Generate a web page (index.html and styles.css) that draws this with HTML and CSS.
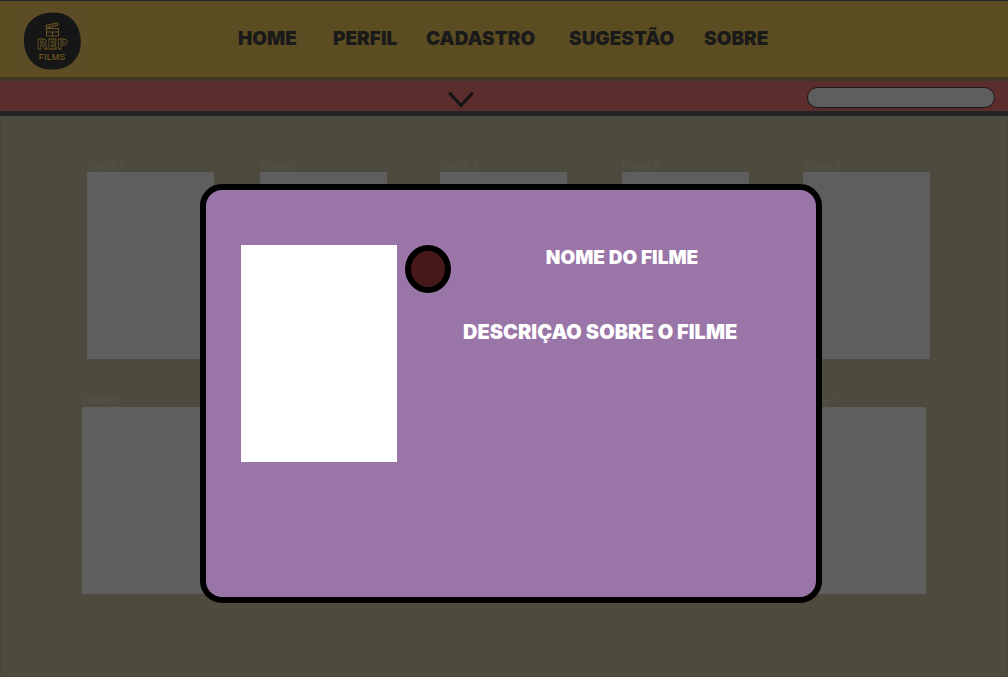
FILE: index.html
```
<!DOCTYPE html>
<html lang="pt-BR">
<head>
<meta charset="utf-8">
<meta name="viewport" content="width=device-width, initial-scale=1">
<title>REP Films</title>
<link rel="stylesheet" href="styles.css">
</head>
<body>
<div class="page">
  <header class="header">
    <a class="logo" href="#" aria-label="REP Films">
      <svg class="logo-art" viewBox="0 0 71 66" aria-hidden="true">
        <path class="logo-blob" d="M35 4.500C48 4 57 10 61 20C64 27 65 37 62 45C58 55 49 61 38 61.500C26 62 18 59 12.500 51C7 43 5.500 33 8 23C11 12 21 5 35 4.500Z"/>
        <g class="logo-line">
          <path d="M29.500 20.500h12v7.500h-12zM29.500 24h12M35.500 24v4M29.500 20l-.8-2.500 11.800-2.800.6 2.600zM32 17l1.500 2.500M35 16.200l1.500 2.500M38 15.500l1.500 2.300"/>
        </g>
        <text class="logo-rep" x="35" y="41">REP</text>
        <text class="logo-films" x="35" y="52">FILMS</text>
      </svg>
    </a>
    <nav class="nav">
      <a href="#">HOME</a>
      <a href="#">PERFIL</a>
      <a href="#">CADASTRO</a>
      <a href="#">SUGESTÃO</a>
      <a href="#">SOBRE</a>
    </nav>
  </header>
  <div class="toolbar">
    <button class="expand" type="button" aria-label="Expandir">
      <svg width="28" height="20" viewBox="0 0 28 20" aria-hidden="true"><path d="M3 4.500L14 16.500L25 4.500"/></svg>
    </button>
    <input class="search" type="search" aria-label="Buscar filme">
  </div>
  <main class="catalog">
    <div class="row row-five">
      <figure class="frame"><figcaption>Frame 1</figcaption><div class="thumb"></div></figure>
      <figure class="frame"><figcaption>Frame 2</figcaption><div class="thumb"></div></figure>
      <figure class="frame"><figcaption>Frame 3</figcaption><div class="thumb"></div></figure>
      <figure class="frame"><figcaption>Frame 4</figcaption><div class="thumb"></div></figure>
      <figure class="frame"><figcaption>Frame 5</figcaption><div class="thumb"></div></figure>
    </div>
    <div class="row row-two">
      <figure class="frame"><figcaption>Frame 6</figcaption><div class="thumb"></div></figure>
      <figure class="frame"><figcaption>Frame 7</figcaption><div class="thumb"></div></figure>
    </div>
  </main>
</div>
<section class="modal" role="dialog" aria-modal="true" aria-labelledby="film-title">
  <div class="poster"></div>
  <button class="close" type="button" aria-label="Fechar"></button>
  <div class="details">
    <h1 class="title" id="film-title">NOME DO FILME</h1>
    <p class="description">DESCRIÇAO SOBRE O FILME</p>
  </div>
</section>
</body>
</html>
```

FILE: styles.css
```
* {
  box-sizing: border-box;
}

body {
  margin: 0;
  font-family: Inter, "Liberation Sans", sans-serif;
  background: #4d4a3e;
}

.page {
  display: flex;
  flex-direction: column;
  min-height: 100vh;
}

.header {
  display: flex;
  align-items: center;
  height: 81px;
  padding-left: 17px;
  border-top: 1px solid #222326;
  border-bottom: 4px solid #3f3822;
  background: #5b4c22;
}

.logo {
  display: block;
  align-self: flex-end;
  width: 71px;
  height: 66px;
  margin-right: 150px;
  margin-bottom: 3px;
  background: #5d4d27;
}

.logo-art {
  display: block;
  width: 71px;
  height: 66px;
}

.logo-blob {
  fill: #161616;
}

.logo-line {
  fill: none;
  stroke: #6b5420;
  stroke-width: 1;
}

.logo-rep {
  font: 700 14px "DejaVu Sans", sans-serif;
  text-anchor: middle;
  fill: #161616;
  stroke: #6b5420;
  stroke-width: 0.8;
}

.logo-films {
  font: 400 9px "Liberation Sans", sans-serif;
  text-anchor: middle;
  fill: #80621f;
}

.nav {
  display: grid;
  grid-template-columns: 95px 93px 143px 135px auto;
  font-size: 19px;
  line-height: 24px;
  font-weight: 900;
}

.nav a {
  color: #1a1a1a;
  text-decoration: none;
}

.toolbar {
  display: grid;
  grid-template-columns: 1fr 188px;
  align-items: center;
  height: 35px;
  padding-right: 13px;
  padding-left: 115px;
  border-bottom: 5px solid #232323;
  background: #5c2d2d;
}

.expand {
  justify-self: center;
  display: block;
  padding: 5px 0 0;
  border: 0;
  background: none;
}

.expand svg {
  display: block;
  fill: none;
  stroke: #141414;
  stroke-width: 3;
  stroke-linecap: round;
}

.search {
  width: 188px;
  height: 21px;
  margin-top: 2px;
  padding: 0 10px;
  border: 1px solid #171717;
  border-radius: 11px;
  outline: 0;
  background: #5e5e5e;
  appearance: none;
}

.catalog {
  display: grid;
  flex: 1;
  align-content: start;
  gap: 36px;
  padding-top: 44px;
  border: 1px solid #47443a;
  border-top: 0;
}

.row-five {
  display: grid;
  grid-template-columns: 173fr 181fr 182fr 182fr 127px;
  padding: 0 77px 0 86px;
}

.row-two {
  display: flex;
  justify-content: space-between;
  padding: 0 81px;
}

.frame {
  width: 127px;
  margin: 0;
}

.frame figcaption {
  height: 12px;
  font-size: 10px;
  line-height: 10px;
  color: #56534a;
}

.thumb {
  height: 187px;
  background: #5e5e5e;
}

.modal {
  position: fixed;
  top: 184px;
  right: 186px;
  left: 200px;
  display: grid;
  grid-template-columns: 156px 46px 1fr;
  align-items: start;
  min-height: 419px;
  padding: 55px 35px;
  border: 6px solid #000;
  border-radius: 22px;
  background: #9a75a7;
}

.poster {
  height: 217px;
  background: #fff;
}

.close {
  width: 46px;
  height: 48px;
  margin-left: 8px;
  padding: 0;
  border: 6px solid #000;
  border-radius: 50%;
  background: #471819;
}

.details {
  display: grid;
  gap: 48px;
  padding-left: 20px;
  font-size: 19px;
  line-height: 26px;
  font-weight: 900;
  color: #fff;
}

.title,
.description {
  margin: 0;
  font: inherit;
}

.title {
  text-align: center;
}

.description {
  font-size: 20px;
}
```
